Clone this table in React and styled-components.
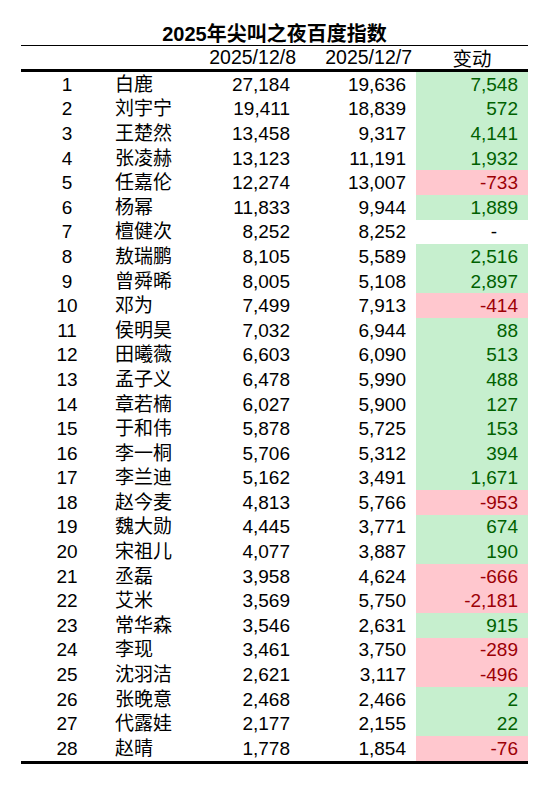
import React from 'react';
import styled, { createGlobalStyle } from 'styled-components';

const GlobalStyle = createGlobalStyle`
body {
  margin: 0;
  background: #fff;
  font-family: "Liberation Sans", "Noto Sans CJK SC", sans-serif;
  color: #000;
}
`;

const Page = styled.div`
width: 548px;
height: 785px;
background: #fff;
padding-left: 21px;
box-sizing: border-box;
`;

const Title = styled.div`
width: 507px;
height: 46px;
box-sizing: border-box;
padding-top: 22px;
text-align: center;
font-size: 20px;
font-weight: bold;
line-height: 24px;
border-bottom: 1px solid #000;
`;

const Table = styled.div`
width: 507px;
display: grid;
grid-template-columns: 92px 92px 95px 116px 112px;
grid-template-rows: 26px;
grid-auto-rows: 24.6px;
border-bottom: 3px solid #000;
`;

const HeadRow = styled.div`
display: contents;
`;

const HeadCell = styled.div`
box-sizing: border-box;
display: flex;
align-items: center;
justify-content: ${p => (p.$center ? 'center' : 'flex-end')};
padding-right: ${p => (p.$center ? '0' : '4px')};
font-size: 19.5px;
border-bottom: 3px solid #000;
`;

const Cell = styled.div`
display: flex;
align-items: center;
font-size: 19px;
line-height: 1;
white-space: nowrap;
`;

const Rank = styled(Cell)`
justify-content: center;
`;

const Name = styled(Cell)`
padding-left: 2px;
`;

const Num = styled(Cell)`
justify-content: flex-end;
padding-right: 10px;
`;

const fills = {
  up: { bg: '#c6efce', fg: '#006100' },
  down: { bg: '#ffc7ce', fg: '#9c0006' },
  none: { bg: '#fff', fg: '#000' },
};

const Change = styled(Num)`
background: ${p => fills[p.$kind].bg};
color: ${p => fills[p.$kind].fg};
padding-right: ${p => (p.$kind === 'none' ? '31px' : '10px')};
`;

const rows = [
  ['白鹿', '27,184', '19,636', '7,548'],
  ['刘宇宁', '19,411', '18,839', '572'],
  ['王楚然', '13,458', '9,317', '4,141'],
  ['张凌赫', '13,123', '11,191', '1,932'],
  ['任嘉伦', '12,274', '13,007', '-733'],
  ['杨幂', '11,833', '9,944', '1,889'],
  ['檀健次', '8,252', '8,252', '-'],
  ['敖瑞鹏', '8,105', '5,589', '2,516'],
  ['曾舜晞', '8,005', '5,108', '2,897'],
  ['邓为', '7,499', '7,913', '-414'],
  ['侯明昊', '7,032', '6,944', '88'],
  ['田曦薇', '6,603', '6,090', '513'],
  ['孟子义', '6,478', '5,990', '488'],
  ['章若楠', '6,027', '5,900', '127'],
  ['于和伟', '5,878', '5,725', '153'],
  ['李一桐', '5,706', '5,312', '394'],
  ['李兰迪', '5,162', '3,491', '1,671'],
  ['赵今麦', '4,813', '5,766', '-953'],
  ['魏大勋', '4,445', '3,771', '674'],
  ['宋祖儿', '4,077', '3,887', '190'],
  ['丞磊', '3,958', '4,624', '-666'],
  ['艾米', '3,569', '5,750', '-2,181'],
  ['常华森', '3,546', '2,631', '915'],
  ['李现', '3,461', '3,750', '-289'],
  ['沈羽洁', '2,621', '3,117', '-496'],
  ['张晚意', '2,468', '2,466', '2'],
  ['代露娃', '2,177', '2,155', '22'],
  ['赵晴', '1,778', '1,854', '-76'],
];

const kindOf = v => (v === '-' ? 'none' : v.startsWith('-') ? 'down' : 'up');

export default function App() {
  return (
    <Page>
      <GlobalStyle />
      <Title>2025年尖叫之夜百度指数</Title>
      <Table>
        <HeadRow>
          <HeadCell />
          <HeadCell />
          <HeadCell>2025/12/8</HeadCell>
          <HeadCell>2025/12/7</HeadCell>
          <HeadCell $center>变动</HeadCell>
        </HeadRow>
        {rows.map(([name, a, b, c], i) => (
          <React.Fragment key={name}>
            <Rank>{i + 1}</Rank>
            <Name>{name}</Name>
            <Num>{a}</Num>
            <Num>{b}</Num>
            <Change $kind={kindOf(c)}>{c}</Change>
          </React.Fragment>
        ))}
      </Table>
    </Page>
  );
}
